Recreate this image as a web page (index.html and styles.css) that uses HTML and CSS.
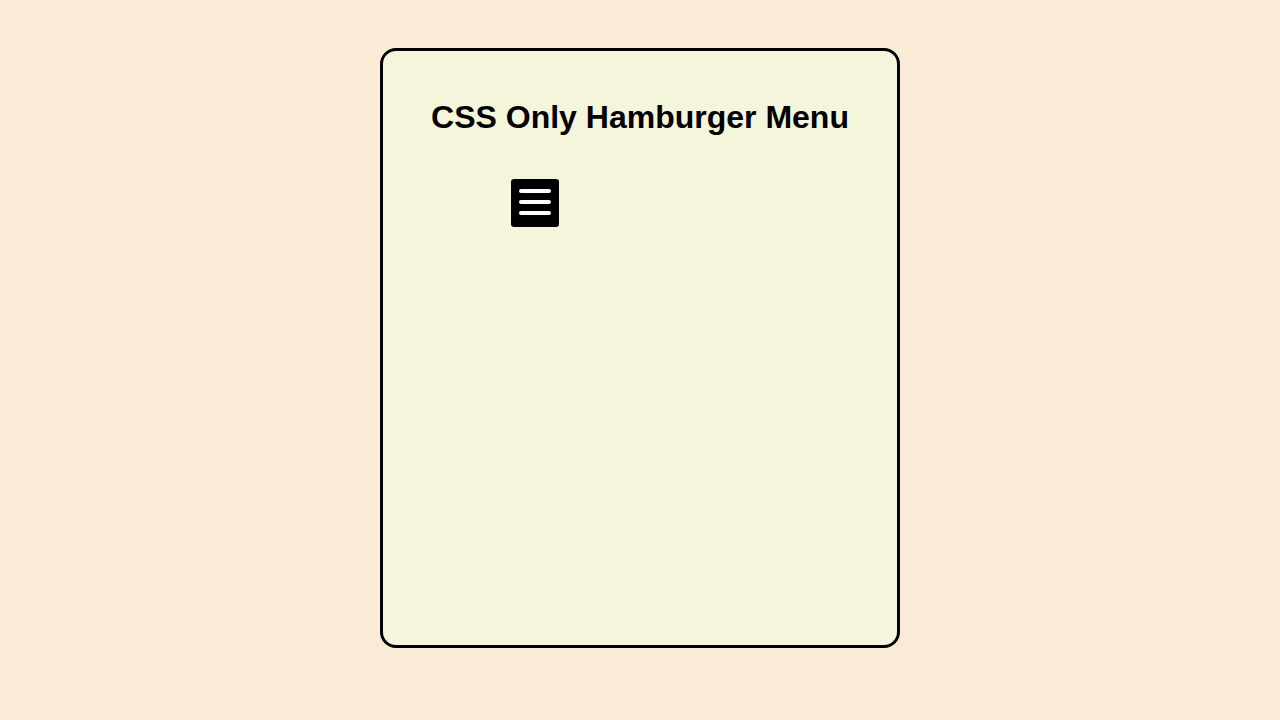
FILE: index.html
```html
<!DOCTYPE html>
<html lang="en">
<head>
<meta charset="utf-8">
<title>CSS Only Hamburger Menu</title>
<link rel="stylesheet" href="styles.css">
</head>
<body>
<main class="card">
  <h1 class="title">CSS Only Hamburger Menu</h1>
  <nav class="menu">
    <label class="burger" aria-label="Open menu">
      <span class="bar"></span>
      <span class="bar"></span>
      <span class="bar"></span>
    </label>
  </nav>
</main>
</body>
</html>
```

FILE: styles.css
```css
html, body {
  margin: 0;
  padding: 0;
}
body {
  background: #faebd7;
  font-family: "Liberation Sans", Arial, sans-serif;
  padding-top: 48px;
}
.card {
  box-sizing: border-box;
  width: 520px;
  height: 600px;
  margin: 0 auto;
  background: #f5f5dc;
  border: 3px solid #000;
  border-radius: 16px;
  padding: 27px 20px 20px;
}
.title {
  margin: 21.44px 0;
  font-size: 32px;
  font-weight: bold;
  text-align: center;
  color: #000;
}
.menu {
  margin-top: 43px;
  padding-left: 108px;
}
.burger {
  box-sizing: border-box;
  width: 48px;
  height: 48px;
  background: #000;
  border-radius: 3px;
  padding: 10px 8px;
  display: flex;
  flex-direction: column;
  gap: 7px;
}
.bar {
  display: block;
  width: 32px;
  height: 4px;
  background: #fff;
  border-radius: 2px;
}
```
